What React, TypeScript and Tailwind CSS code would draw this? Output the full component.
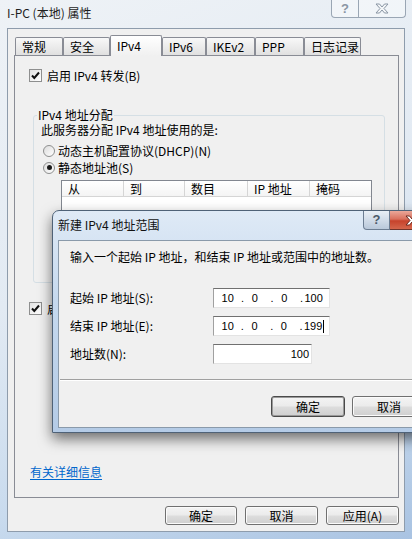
import type { ReactNode } from "react";

const TABS = [
  { label: "常规", w: "w-[48px]" },
  { label: "安全", w: "w-[47px]" },
  { label: "IPv4", w: "w-[52px]", active: true },
  { label: "IPv6", w: "w-[44px]" },
  { label: "IKEv2", w: "w-[49px]" },
  { label: "PPP", w: "w-[49px]" },
  { label: "日志记录", w: "w-[57px]" },
];

const COLUMNS = [
  { label: "从", w: "w-[62px]" },
  { label: "到", w: "w-[61px]" },
  { label: "数目", w: "w-[63px]" },
  { label: "IP 地址", w: "w-[62px]" },
  { label: "掩码", w: "flex-1" },
];

function Button({ children, className = "", isDefault = false }: { children: ReactNode; className?: string; isDefault?: boolean }) {
  return (
    <div
      className={`flex items-center justify-center rounded-[3px] border bg-[linear-gradient(180deg,#f4f4f4_0%,#ebebeb_48%,#dddddd_52%,#cfcfcf_100%)] ${
        isDefault
          ? "border-[#4a4a4a] shadow-[inset_0_0_0_1px_#9a9a9a]"
          : "border-[#707070] shadow-[inset_0_0_0_1px_#fbfbfb]"
      } ${className}`}
    >
      {children}
    </div>
  );
}

function Checkbox() {
  return (
    <div className="flex h-[13px] w-[13px] shrink-0 items-center justify-center border border-[#8e8f8f] bg-gradient-to-br from-[#e2e2e2] to-white">
      <svg width="11" height="11" viewBox="0 0 11 11">
        <path d="M2 5.5 L4.3 8 L9 2.5" fill="none" stroke="#111" strokeWidth="2" />
      </svg>
    </div>
  );
}

function Radio({ checked = false }: { checked?: boolean }) {
  return (
    <div className="flex h-[12px] w-[12px] items-center justify-center rounded-full border border-[#8e8f8f] bg-gradient-to-br from-[#dcdcdc] to-white">
      {checked && <div className="h-[5px] w-[5px] rounded-full bg-[#1a1a1a]" />}
    </div>
  );
}

function IpField({ last, cursor = false }: { last: string; cursor?: boolean }) {
  return (
    <div className="flex h-[20px] w-[117px] items-center border border-t-[#707070] border-l-[#a0a0a0] border-r-[#e3e3e3] border-b-[#e3e3e3] bg-white pl-px font-['Liberation_Sans',sans-serif] text-[11px] leading-[12px]">
      <span className="w-[26px] text-center">10</span>
      <span className="w-[4px] text-center">.</span>
      <span className="w-[26px] pr-[5px] text-center">0</span>
      <span className="w-[4px] text-center">.</span>
      <span className="w-[26px] pr-[5px] text-center">0</span>
      <span className="w-[4px] text-center">.</span>
      <span className="flex w-[26px] items-center pr-[5px] pl-[1px]">
        {last}
        {cursor && <span className="ml-px h-[13px] w-px bg-black" />}
      </span>
    </div>
  );
}

function CloseGlyph({ fill, stroke }: { fill: string; stroke: string }) {
  return (
    <svg width="14" height="11" viewBox="0 0 14 11">
      <path
        d="M1 1 H4.5 L7 4 L9.5 1 H13 L9 5.5 L13 10 H9.5 L7 7 L4.5 10 H1 L5 5.5 Z"
        fill={fill}
        stroke={stroke}
        strokeWidth="1"
        strokeLinejoin="round"
      />
    </svg>
  );
}

export default function App() {
  return (
    <div className="relative h-[539px] w-[412px] overflow-hidden bg-[linear-gradient(160deg,#eef2f6_0%,#e2eaf3_45%,#c9dbee_75%,#a9c3e2_100%)] font-['Noto_Sans_CJK_SC',sans-serif] text-[12px] leading-[14px] text-black">
      {/* title bar */}
      <div className="flex h-[28px] items-start">
        <div className="pt-[6px] pl-[7px] text-[#1e1e1e]">I-PC (本地) 属性</div>
        <div className="mr-[6px] ml-auto flex">
          <div className="flex h-[18px] w-[28px] items-center justify-center rounded-bl-[4px] border border-t-0 border-[#9aa6b4] bg-white/40 font-['Liberation_Sans',sans-serif] text-[13px] font-bold text-[#8a96a4]">
            ?
          </div>
          <div className="flex h-[18px] w-[47px] items-center justify-center rounded-br-[4px] border border-t-0 border-l-0 border-[#9aa6b4] bg-white/40">
            <CloseGlyph fill="#f4f6f8" stroke="#8a96a4" />
          </div>
        </div>
      </div>

      {/* window content */}
      <div className="ml-[7px] flex h-[504px] w-[398px] flex-col border border-[#8e9cac] bg-[#f0f0f0]">
        <div className="ml-[6px] flex flex-col">
          <div className="relative z-10 mt-[6px] ml-px flex h-[21px] items-end">
            {TABS.map((t) =>
              t.active ? (
                <div
                  key={t.label}
                  className={`${t.w} h-[21px] rounded-t-[2px] border border-b-0 border-[#898c95] bg-gradient-to-b from-white to-[#f0f0f0] pt-[3px] pl-[6px]`}
                >
                  {t.label}
                </div>
              ) : (
                <div
                  key={t.label}
                  className={`${t.w} mb-px h-[18px] rounded-t-[2px] border border-b-0 border-[#898c95] bg-gradient-to-b from-[#f8f8f8] to-[#e0e0e0] pt-[2px] pl-[6px]`}
                >
                  {t.label}
                </div>
              ),
            )}
          </div>

          {/* tab panel */}
          <div className="-mt-px flex h-[443px] w-[385px] flex-col border border-[#898c95] bg-[#f0f0f0]">
            <div className="mt-[13px] ml-[14px] flex h-[13px] items-center gap-[5px]">
              <Checkbox />
              <span>启用 IPv4 转发(B)</span>
            </div>

            <fieldset className="mt-[26px] ml-[18px] h-[175px] w-[352px] rounded-[3px] border border-[#d5dfe5]">
              <legend className="ml-[3px] px-px leading-[14px]">IPv4 地址分配</legend>
              <div className="pl-[7px]">
                <div className="mt-px">此服务器分配 IPv4 地址使用的是:</div>
                <div className="mt-[5px] ml-[2px] flex h-[17px] items-center gap-[3px]">
                  <Radio />
                  <span>动态主机配置协议(DHCP)(N)</span>
                </div>
                <div className="ml-[2px] flex h-[17px] items-center gap-[3px]">
                  <Radio checked />
                  <span>静态地址池(S)</span>
                </div>
                <div className="mt-[4px] ml-[20px] w-[311px] border border-[#828790] bg-white">
                  <div className="flex h-[16px] border-b border-[#d5d5d5] bg-gradient-to-b from-white to-[#f4f4f4]">
                    {COLUMNS.map((c) => (
                      <div key={c.label} className={`${c.w} border-r border-[#d5d5d5] pl-[6px] leading-[16px] last:border-r-0`}>
                        {c.label}
                      </div>
                    ))}
                  </div>
                  <div className="h-[60px]" />
                </div>
              </div>
            </fieldset>

            <div className="mt-[19px] ml-[14px] flex h-[13px] w-[24px] items-center gap-[5px] overflow-hidden">
              <Checkbox />
              <span className="whitespace-nowrap">启用广播名称解析(D)</span>
            </div>

            <div className="mt-[150px] ml-[15px] text-[#0066cc] underline underline-offset-2">有关详细信息</div>
          </div>
        </div>

        <div className="mt-[8px] flex justify-end gap-[8px] pr-[5px]">
          <Button className="h-[19px] w-[72px]">确定</Button>
          <Button className="h-[19px] w-[73px]">取消</Button>
          <Button className="h-[19px] w-[73px]">应用(A)</Button>
        </div>
      </div>

      {/* new range dialog */}
      <div className="absolute top-[210px] left-[52px] flex h-[223px] w-[380px] flex-col rounded-t-[7px] border border-[#4f6277] bg-[linear-gradient(180deg,#dfeaf6_0%,#c6d9ee_40%,#b4cbe6_100%)] shadow-[0_6px_14px_rgba(0,0,0,0.55)]">
        <div className="relative h-[29px] shrink-0">
          <div className="pt-[7px] pl-[5px] text-[#111]">新建 IPv4 地址范围</div>
          <div className="absolute top-0 left-[310px] flex">
            <div className="flex h-[19px] w-[27px] items-center justify-center rounded-bl-[4px] border border-t-0 border-[#6c7d92] bg-gradient-to-b from-[#e9eff6] to-[#b9c8da] font-['Liberation_Sans',sans-serif] text-[13px] font-bold text-[#4c5a6a]">
              ?
            </div>
            <div className="flex h-[19px] w-[44px] items-center justify-center border border-t-0 border-l-0 border-[#70342b] bg-[linear-gradient(180deg,#eba89a_0%,#d9705d_45%,#c7432c_55%,#d4664c_100%)]">
              <CloseGlyph fill="#ffffff" stroke="#6b2a20" />
            </div>
          </div>
        </div>

        <div className="ml-[5px] h-[188px] shrink-0 border border-[#8a9aaa] bg-[#f0f0f0] pt-[9px] pl-[11px]">
          <div>输入一个起始 IP 地址，和结束 IP 地址或范围中的地址数。</div>

          <div className="mt-[24px] flex flex-col gap-[8px]">
            <div className="flex h-[20px] items-center">
              <span className="w-[143px]">起始 IP 地址(S):</span>
              <IpField last="100" />
            </div>
            <div className="flex h-[20px] items-center">
              <span className="w-[143px]">结束 IP 地址(E):</span>
              <IpField last="199" cursor />
            </div>
            <div className="flex h-[20px] items-center">
              <span className="w-[143px]">地址数(N):</span>
              <div className="flex h-[20px] w-[99px] items-center justify-end border border-t-[#707070] border-l-[#a0a0a0] border-r-[#e3e3e3] border-b-[#e3e3e3] bg-white pr-[2px] font-['Liberation_Sans',sans-serif] text-[11px]">
                100
              </div>
            </div>
          </div>

          <div className="mt-[15px] -ml-[10px] h-[2px] border-t border-b border-t-[#a0a0a0] border-b-white" />

          <div className="mt-[15px] ml-[201px] flex gap-[7px]">
            <Button isDefault className="h-[21px] w-[74px]">
              确定
            </Button>
            <Button className="h-[21px] w-[74px]">取消</Button>
          </div>
        </div>
      </div>
    </div>
  );
}
